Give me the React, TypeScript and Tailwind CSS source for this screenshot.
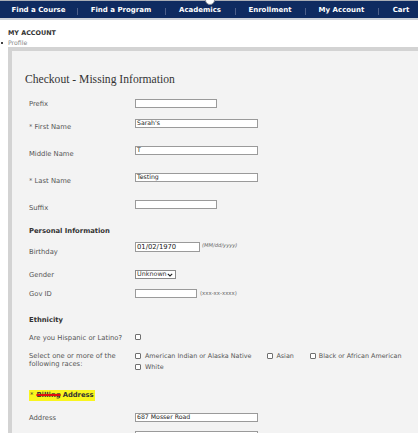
import React from 'react';

const navItems = [
  { label: 'Find a Course', w: 'w-[77px]' },
  { label: 'Find a Program', w: 'w-[88px]' },
  { label: 'Academics', w: 'w-[70px]' },
  { label: 'Enrollment', w: 'w-[70px]' },
  { label: 'My Account', w: 'w-[73px]' },
  { label: 'Cart', w: 'w-[46px]' },
];

function Box({ w, value, children }: { w: string; value?: string; children?: React.ReactNode }) {
  return (
    <span className={`flex h-[9px] items-center border border-[#9a9a9a] bg-white pl-[1px] text-[6.2px] leading-none text-[#222] ${w}`}>
      {value}
      {children}
    </span>
  );
}

function Check() {
  return <span className="block h-[6px] w-[6px] shrink-0 rounded-[1px] border border-[#6f6f6f] bg-white" />;
}

function Row({ label, h, mt, children }: { label: React.ReactNode; h: string; mt: string; children: React.ReactNode }) {
  return (
    <div className={`flex items-start ${h}`}>
      <div className={`w-[106px] shrink-0 text-[6.8px] leading-[8px] text-[#555] ${mt}`}>{label}</div>
      <div className="flex items-start">{children}</div>
    </div>
  );
}

export default function App() {
  return (
    <div className="relative h-[433px] w-[418px] overflow-hidden bg-white font-['DejaVu_Sans',Verdana,sans-serif]">
      <div className="h-[1px] bg-[#a9adb5]" />
      <nav className="flex h-[19px] items-center border-b-2 border-[#cdd1d8] bg-[#0f2b61] pt-[1px] text-[7px] font-bold text-white">
        {navItems.map((item, i) => (
          <div key={item.label} className={`relative flex h-full shrink-0 items-center justify-center ${item.w}`}>
            {i > 0 && <span className="absolute left-0 top-[6px] h-[7px] w-[1px] bg-[#4d5f8a]" />}
            {item.label}
          </div>
        ))}
      </nav>
      <span className="absolute left-[205px] top-[-5px] h-[10px] w-[10px] rounded-full border border-[#8a8f99] bg-white" />

      <div className="px-[8px] pt-[9px] text-[6.4px] font-bold leading-[8px] text-[#333]">MY ACCOUNT</div>
      <div className="flex items-center pt-[2px] text-[6.2px] leading-[8px] text-[#888]">
        <span className="ml-[1px] mr-[5px] h-[2px] w-[2px] bg-[#444]" />
        Profile
      </div>

      <div className="ml-[8px] w-[430px] border-l-[4px] border-t-[4px] border-[#d3d3d3] bg-[#f3f3f3] pl-[17px]">
        <h1 className="-ml-[4px] pt-[22px] font-['Liberation_Serif',Georgia,serif] text-[11.6px] leading-[14px] text-[#333]">
          Checkout - Missing Information
        </h1>

        <div className="pt-[12px]">
          <Row label="Prefix" h="h-[20px]" mt="mt-[1px]">
            <Box w="w-[82px]" />
          </Row>
          <Row label="* First Name" h="h-[27px]" mt="mt-[4px]">
            <Box w="w-[123px]" value="Sarah's" />
          </Row>
          <Row label="Middle Name" h="h-[27px]" mt="mt-[4px]">
            <Box w="w-[123px]" value="T" />
          </Row>
          <Row label="* Last Name" h="h-[27px]" mt="mt-[4px]">
            <Box w="w-[123px]" value="Testing" />
          </Row>
          <Row label="Suffix" h="h-[27px]" mt="mt-[4px]">
            <Box w="w-[82px]" />
          </Row>

          <div className="h-[15px] text-[6.8px] font-bold leading-[8px] text-[#333]">Personal Information</div>
          <Row label="Birthday" h="h-[28px]" mt="mt-[6px]">
            <span className="flex h-[10px] w-[65px] items-center border border-[#9a9a9a] bg-white pl-[1px] text-[6.8px] leading-none text-[#222]">
              01/02/1970
            </span>
            <span className="ml-[2px] text-[5.2px] italic leading-[6px] text-[#666]">(MM/dd/yyyy)</span>
          </Row>
          <Row label="Gender" h="h-[19px]" mt="mt-[1px]">
            <span className="flex h-[9px] w-[41px] items-center justify-between border border-[#8a8a8a] bg-white px-[1px] text-[6.4px] leading-none text-[#333]">
              Unknown
              <svg width="6" height="4" viewBox="0 0 6 4" className="mr-[1px]">
                <path d="M0.8 0.8 L3 3 L5.2 0.8" fill="none" stroke="#222" strokeWidth="1.1" />
              </svg>
            </span>
          </Row>
          <Row label="Gov ID" h="h-[27px]" mt="mt-[1px]">
            <Box w="w-[62px]" />
            <span className="ml-[3px] mt-[1px] text-[5.4px] leading-[7px] text-[#666]">(xxx-xx-xxxx)</span>
          </Row>

          <div className="h-[18px] text-[6.8px] font-bold leading-[8px] text-[#333]">Ethnicity</div>
          <Row label="Are you Hispanic or Latino?" h="h-[18px]" mt="mt-0">
            <span className="flex"><Check /></span>
          </Row>
          <Row label={<>Select one or more of the<br />following races:</>} h="h-[38px]" mt="mt-0">
            <div className="flex flex-col gap-[3px] text-[6.4px] leading-[8px] text-[#555]">
              <div className="flex items-center">
                <Check />
                <span className="ml-[4px]">American Indian or Alaska Native</span>
                <span className="ml-[16px]"><Check /></span>
                <span className="ml-[3px]">Asian</span>
                <span className="ml-[16px]"><Check /></span>
                <span className="ml-[3px]">Black or African American</span>
              </div>
              <div className="flex items-center">
                <Check />
                <span className="ml-[4px]">White</span>
              </div>
            </div>
          </Row>

          <div className="flex h-[23px] items-start">
            <span className="flex h-[11px] items-center bg-[#f9f51e] px-[1px] text-[6.8px] font-bold leading-none text-[#333]">
              <span className="font-normal">*</span>
              <span className="ml-[3px] line-through decoration-[#e01010] decoration-[1.5px]">Billing</span>
              <span className="ml-[2px]">Address</span>
            </span>
          </div>
          <Row label="Address" h="h-[18px]" mt="mt-[1px]">
            <Box w="w-[123px]" value="687 Mosser Road" />
          </Row>
          <Row label="" h="h-[18px]" mt="mt-[1px]">
            <Box w="w-[123px]" />
          </Row>
        </div>
      </div>
    </div>
  );
}
